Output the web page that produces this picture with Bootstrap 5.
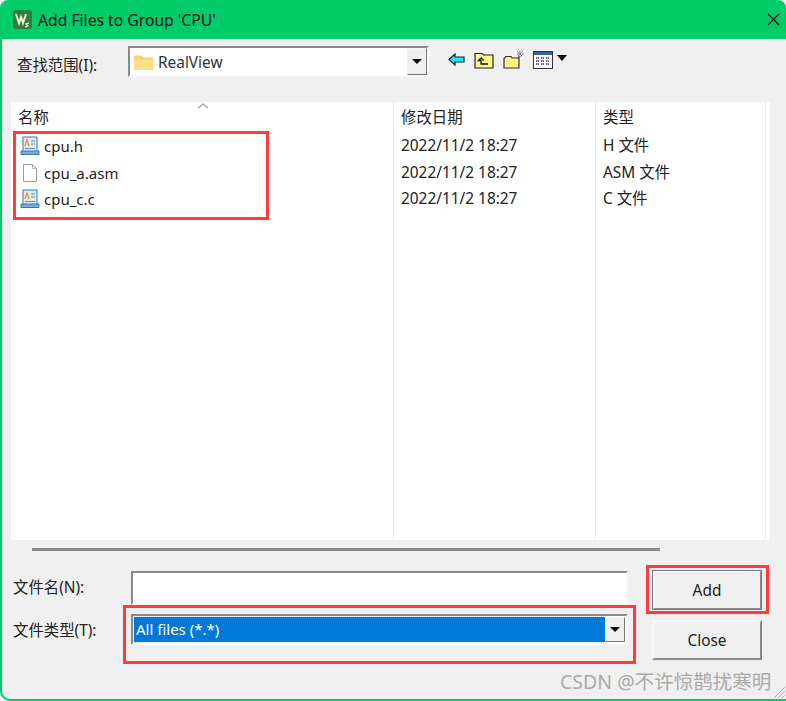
<!DOCTYPE html>
<html lang="zh">
<head>
    <title>Add Files to Group 'CPU'</title>
    <meta charset="UTF-8">
    <meta name="viewport" content="width=device-width, initial-scale=1.0">
    <link href="https://cdn.jsdelivr.net/npm/bootstrap@5.3.0/dist/css/bootstrap.min.css" rel="stylesheet">
    <style>
        html, body { margin: 0; height: 701px; overflow: hidden; background: #fff; }
        body { font-family: "Noto Sans", "Noto Sans CJK SC", sans-serif; font-size: 15.4px; color: #222; line-height: 20px; }
        .dlg-window { position: relative; width: 786px; height: 701px; background: #f0f0f0; border-left: 2px solid #00cc6a; border-bottom: 2px solid #00cc6a; border-radius: 8px 8px 0 10px; overflow: hidden; }
        .dlg-title { height: 39px; background: #00cc6a; padding-left: 11px; color: #111; font-size: 15.7px; }
        .dlg-title svg { margin-right: 6px; }
        .dlg-close { margin-left: auto; margin-right: 13px; }
        .dlg-tools { height: 63px; padding-left: 15px; padding-top: 7px; }
        .dlg-look { width: 111px; padding-top: 10px; }
        .sunken { border: 2px solid; border-color: #8a8a8a #f8f8f8 #f8f8f8 #8a8a8a; background: #fff; }
        .look-combo { width: 301px; height: 31px; padding-left: 3px; color: #333; }
        .look-combo span { padding-top: 2px; }
        .combo-btn { width: 20px; background: #f0f0f0; border: 1px solid; border-color: #f5f5f5 #777 #777 #f5f5f5; margin-left: auto; }
        .combo-arrow { width: 0; height: 0; border: 5px solid transparent; border-top: 5px solid #000; border-bottom: 0; }
        .tool-row { margin-left: 19px; margin-top: 4px; gap: 9px; }
        .file-pane { margin-left: 9px; width: 759px; height: 438px; background: #fff; position: relative; }
        .file-head { height: 30px; padding-top: 6px; }
        .file-head .col-name { padding-left: 7px; }
        .file-row { height: 26.5px; align-items: center; padding-top: 2px; }
        .col-name { width: 382px; padding-left: 9px; flex: none; }
        .file-row .col-name { font-size: 15px; }
        .col-date { width: 202px; padding-left: 8px; flex: none; }
        .col-kind { width: 170px; padding-left: 8px; flex: none; }
        .col-name svg { margin-right: 4px; }
        .col-line { position: absolute; top: 0; bottom: 0; width: 1px; background: #e6eef5; }
        .sort-mark { position: absolute; left: 186px; top: 0; }
        .dlg-rule { margin: 8px 0 0 30px; width: 628px; height: 3px; background: #8a8a8a; }
        .dlg-bottom { padding: 20px 0 0 11px; }
        .form-labels { width: 118px; }
        .name-label { margin-top: 7px; }
        .kind-label { margin-top: 23px; }
        .name-input { display: block; width: 497px; height: 34px; border-radius: 0; outline: 0; padding: 0 4px; }
        .kind-combo { width: 497px; height: 31px; margin-top: 9px; padding: 1px; }
        .kind-sel { flex: 1; background: #0078d7; color: #fff; padding: 1px 0 0 2px; line-height: 22px; outline: 1px dotted #cde; font-size: 15px; }
        .dlg-btn { width: 110px; height: 40px; background: #f0f0f0; color: #222; font-size: 15.4px; border: 2px solid; border-color: #f8f8f8 #8a8a8a #8a8a8a #f8f8f8; border-radius: 0; padding: 2px 0 0; }
        .dlg-btn.is-default { outline: 1px solid #777; outline-offset: -1px; }
        .btn-side { margin-left: 24px; margin-top: -1px; gap: 10px; }
        .mark-box { position: absolute; border: 3px solid #ff3b3b; pointer-events: none; }
        .mark-files { left: 13px; top: 131px; width: 256px; height: 89px; }
        .mark-kind { left: 123px; top: 605px; width: 513px; height: 59px; }
        .mark-add { left: 646px; top: 565px; width: 123px; height: 49px; }
        .csdn-mark { position: absolute; left: 560px; top: 670px; font-size: 19.5px; line-height: 24px; color: #a9a9a9; white-space: nowrap; }
        .grip { position: absolute; right: 0; bottom: 0; }
    </style>
</head>
<body>
    <div class="dlg-window">
        <div class="dlg-title d-flex align-items-center">
            <svg width="19" height="19" viewBox="0 0 19 19"><rect width="19" height="19" rx="3" fill="#2f7d3f"/><path d="M3 4l3 9 2-6 2 6 3-9" fill="none" stroke="#e8f2d8" stroke-width="2"/><path d="M12 17l3-1-2-2 3-1" fill="none" stroke="#fff" stroke-width="1.2"/></svg>
            <span>Add Files to Group 'CPU'</span>
            <svg class="dlg-close" width="13" height="13" viewBox="0 0 13 13"><path d="M1 1l11 11M12 1L1 12" stroke="#111" stroke-width="1.1" fill="none"/></svg>
        </div>

        <!-- look in row -->
        <div class="dlg-tools d-flex align-items-start">
            <div class="dlg-look">查找范围(I):</div>
            <div class="sunken look-combo d-flex align-items-center">
                <svg class="me-1" width="21" height="18" viewBox="0 0 21 18"><path d="M1 3.5a1 1 0 0 1 1-1h6l2 2h9a1 1 0 0 1 1 1V16a1 1 0 0 1-1 1H2a1 1 0 0 1-1-1z" fill="#fcd462"/><path d="M1 6.5h19V16a1 1 0 0 1-1 1H2a1 1 0 0 1-1-1z" fill="#fde08a"/></svg>
                <span>RealView</span>
                <div class="combo-btn align-self-stretch d-flex align-items-center justify-content-center"><div class="combo-arrow"></div></div>
            </div>
            <div class="tool-row d-flex align-items-center">
                <svg width="17" height="13" viewBox="0 0 17 13"><path d="M1 6.5L7 1v3h9v5H7v3z" fill="#22e6f2" stroke="#0a2a3a" stroke-width="1.2"/></svg>
                <svg width="20" height="18" viewBox="0 0 20 18"><path d="M1 4V2.500h7L9.500 4H19v13H1z" fill="#fdf58c" stroke="#222" stroke-width="1.2"/><path d="M7 7l-2.500 2.500H7V13h7M7 6.500l2.500 3" fill="none" stroke="#111" stroke-width="1.300"/></svg>
                <svg width="21" height="19" viewBox="0 0 21 19"><path d="M1 18V8.500L3 6.500h5l1 1.500h6l1-1v11z" fill="#fdf58c" stroke="#333" stroke-width="1.200"/><path d="M17 1v6M14 4h7M14.500 1.500l5 5M19.500 1.500l-5 5" stroke="#666" stroke-width="1" stroke-dasharray="1.500 1"/></svg>
                <div class="d-flex align-items-start gap-1">
                    <svg width="20" height="18" viewBox="0 0 20 18"><rect x=".5" y=".5" width="19" height="17" fill="#fff" stroke="#333"/><rect x="1" y="1" width="18" height="3" fill="#3b5f9e"/><path d="M3 7h3M8 7h3M13 7h3M3 10h3M8 10h3M13 10h3M3 13h3M8 13h3M13 13h3" stroke="#2a2ab0" stroke-width="1.500" stroke-dasharray="1.500 .5"/></svg>
                    <div class="mt-1" style="border:5px solid transparent;border-top:6px solid #000;border-bottom:0"></div>
                </div>
            </div>
        </div>

        <!-- file list -->
        <div class="file-pane">
            <svg class="sort-mark" width="12" height="7" viewBox="0 0 12 7"><path d="M1 6l5-4 5 4" fill="none" stroke="#999" stroke-width="1.200"/></svg>
            <div class="col-line" style="left:382px"></div>
            <div class="col-line" style="left:584px"></div>
            <div class="col-line" style="left:754px"></div>
            <div class="file-head d-flex">
                <div class="col-name">名称</div>
                <div class="col-date">修改日期</div>
                <div class="col-kind">类型</div>
            </div>
            <div class="file-row d-flex">
                <div class="col-name d-flex align-items-center">
                    <svg width="20" height="20" viewBox="0 0 20 20"><path d="M3 1h14v15H3z" fill="#dfecf9" stroke="#3d77ad"/><path d="M1 15h18v3.500H1z" fill="#7fabd3" stroke="#3d77ad"/><path d="M5 10l2-6 2 6" fill="none" stroke="#f08a2c" stroke-width="1.300"/><path d="M11 5h4M11 8h4M5 12.500h10" stroke="#5a8fc0"/></svg>
                    <span>cpu.h</span>
                </div>
                <div class="col-date">2022/11/2 18:27</div>
                <div class="col-kind">H 文件</div>
            </div>
            <div class="file-row d-flex">
                <div class="col-name d-flex align-items-center">
                    <svg width="20" height="20" viewBox="0 0 20 20"><path d="M3.500 1.500h9l4 4v13h-13z" fill="#fff" stroke="#9a9a9a"/><path d="M12.500 1.500v4h4" fill="none" stroke="#b5b5b5"/></svg>
                    <span>cpu_a.asm</span>
                </div>
                <div class="col-date">2022/11/2 18:27</div>
                <div class="col-kind">ASM 文件</div>
            </div>
            <div class="file-row d-flex">
                <div class="col-name d-flex align-items-center">
                    <svg width="20" height="20" viewBox="0 0 20 20"><path d="M3 1h14v15H3z" fill="#dfecf9" stroke="#3d77ad"/><path d="M1 15h18v3.500H1z" fill="#7fabd3" stroke="#3d77ad"/><path d="M5 10l2-6 2 6" fill="none" stroke="#f08a2c" stroke-width="1.300"/><path d="M11 5h4M11 8h4M5 12.500h10" stroke="#5a8fc0"/></svg>
                    <span>cpu_c.c</span>
                </div>
                <div class="col-date">2022/11/2 18:27</div>
                <div class="col-kind">C 文件</div>
            </div>
        </div>

        <div class="dlg-rule"></div>

        <!-- name and type -->
        <div class="dlg-bottom d-flex">
            <div class="form-labels flex-shrink-0">
                <div class="name-label">文件名(N):</div>
                <div class="kind-label">文件类型(T):</div>
            </div>
            <div>
                <input class="sunken name-input" type="text" aria-label="文件名">
                <div class="sunken kind-combo d-flex">
                    <div class="kind-sel">All files (*.*)</div>
                    <div class="combo-btn d-flex align-items-center justify-content-center"><div class="combo-arrow"></div></div>
                </div>
            </div>
            <div class="btn-side d-flex flex-column">
                <button class="btn dlg-btn is-default" type="button">Add</button>
                <button class="btn dlg-btn" type="button">Close</button>
            </div>
        </div>

        <svg class="grip" width="14" height="14" viewBox="0 0 14 14"><path d="M13 2L2 13M13 6L6 13M13 10l-3 3" stroke="#aaa" stroke-width="1"/></svg>
    </div>

    <!-- annotations drawn over the dialog -->
    <div class="mark-box mark-files"></div>
    <div class="mark-box mark-kind"></div>
    <div class="mark-box mark-add"></div>
    <div class="csdn-mark">CSDN @不许惊鹊扰寒明</div>

    <script src="https://cdn.jsdelivr.net/npm/bootstrap@5.3.0/dist/js/bootstrap.bundle.min.js"></script>
</body>
</html>
